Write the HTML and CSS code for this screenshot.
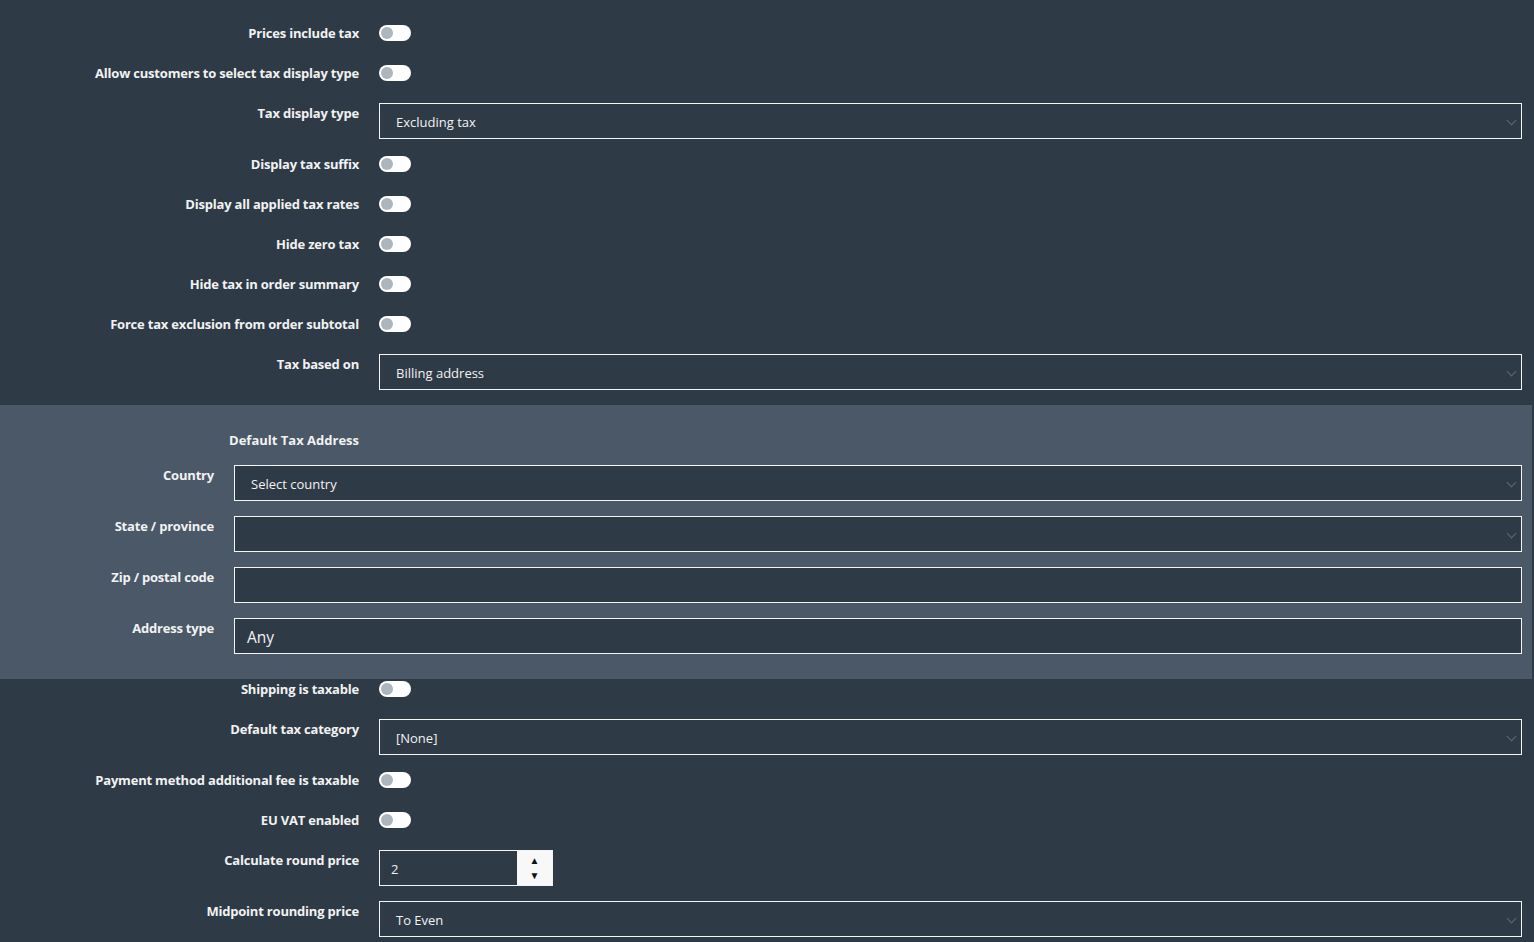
FILE: index.html
```html
<!DOCTYPE html>
<html lang="en">
<head>
    <meta charset="UTF-8">
    <title>Tax settings</title>
    <link rel="stylesheet" href="styles.css">
</head>
<body>
    <div class="settings">
        <div class="row toggle-row">
            <label class="row-label">Prices include tax</label>
            <span class="switch"></span>
        </div>
        <div class="row toggle-row">
            <label class="row-label">Allow customers to select tax display type</label>
            <span class="switch"></span>
        </div>
        <div class="row field-row">
            <label class="row-label">Tax display type</label>
            <div class="select">Excluding tax</div>
        </div>
        <div class="row toggle-row">
            <label class="row-label">Display tax suffix</label>
            <span class="switch"></span>
        </div>
        <div class="row toggle-row">
            <label class="row-label">Display all applied tax rates</label>
            <span class="switch"></span>
        </div>
        <div class="row toggle-row">
            <label class="row-label">Hide zero tax</label>
            <span class="switch"></span>
        </div>
        <div class="row toggle-row">
            <label class="row-label">Hide tax in order summary</label>
            <span class="switch"></span>
        </div>
        <div class="row toggle-row">
            <label class="row-label">Force tax exclusion from order subtotal</label>
            <span class="switch"></span>
        </div>
        <div class="row field-row">
            <label class="row-label">Tax based on</label>
            <div class="select">Billing address</div>
        </div>

        <div class="address-panel">
            <div class="panel-title">Default Tax Address</div>
            <div class="panel-row">
                <label class="panel-label">Country</label>
                <div class="select panel-select">Select country</div>
            </div>
            <div class="panel-row">
                <label class="panel-label">State / province</label>
                <div class="select panel-select"></div>
            </div>
            <div class="panel-row">
                <label class="panel-label">Zip / postal code</label>
                <div class="text-input"></div>
            </div>
            <div class="panel-row">
                <label class="panel-label">Address type</label>
                <div class="text-input large">Any</div>
            </div>
        </div>

        <div class="row toggle-row">
            <label class="row-label">Shipping is taxable</label>
            <span class="switch"></span>
        </div>
        <div class="row field-row">
            <label class="row-label">Default tax category</label>
            <div class="select">[None]</div>
        </div>
        <div class="row toggle-row">
            <label class="row-label">Payment method additional fee is taxable</label>
            <span class="switch"></span>
        </div>
        <div class="row toggle-row">
            <label class="row-label">EU VAT enabled</label>
            <span class="switch"></span>
        </div>
        <div class="row field-row">
            <label class="row-label">Calculate round price</label>
            <div class="number-input">
                <span class="number-value">2</span>
                <span class="spinner">
                    <span>&#9650;</span>
                    <span>&#9660;</span>
                </span>
            </div>
        </div>
        <div class="row field-row">
            <label class="row-label">Midpoint rounding price</label>
            <div class="select">To Even</div>
        </div>
    </div>
</body>
</html>
```

FILE: styles.css
```css
* {
    box-sizing: border-box;
}
body {
    margin: 0;
    background-color: #2f3a47;
    font-family: "Open Sans", "Noto Sans", Arial, sans-serif;
    color: #f2f2f2;
    overflow: hidden;
}
.settings {
    padding-top: 23px;
}
.row {
    display: flex;
    align-items: flex-start;
    padding-right: 12px;
}
.row-label {
    width: 359px;
    margin-right: 20px;
    flex-shrink: 0;
    text-align: right;
    font-size: 13px;
    font-weight: 700;
    line-height: 20px;
    letter-spacing: -0.2px;
    white-space: nowrap;
}
.toggle-row {
    height: 20px;
    margin-bottom: 20px;
    align-items: center;
}
.field-row {
    margin-bottom: 15px;
}
.switch {
    position: relative;
    width: 32px;
    height: 16px;
    border-radius: 8px;
    background-color: #fff;
}
.switch::after {
    content: "";
    position: absolute;
    left: 2px;
    top: 2px;
    width: 12px;
    height: 12px;
    border-radius: 50%;
    background-color: #adb5bd;
}
.select,
.text-input {
    position: relative;
    flex: 1;
    height: 36px;
    border: 1px solid #f4f4f4;
    background-color: #2f3a47;
    padding-left: 16px;
    font-size: 13px;
    line-height: 36px;
}
.select::after {
    content: "";
    position: absolute;
    right: 6px;
    top: 13px;
    width: 6px;
    height: 6px;
    border-right: 1.5px solid #666;
    border-bottom: 1.5px solid #666;
    transform: rotate(45deg);
}
.address-panel {
    background-color: #4a5868;
    margin-right: 2px;
    padding: 25px 10px 25px 0;
}
.panel-title {
    width: 359px;
    text-align: right;
    font-size: 13px;
    font-weight: 700;
    line-height: 20px;
    margin-bottom: 15px;
}
.panel-row {
    display: flex;
    margin-bottom: 15px;
}
.panel-row:last-child {
    margin-bottom: 0;
}
.panel-label {
    width: 214px;
    margin-right: 20px;
    flex-shrink: 0;
    text-align: right;
    font-size: 13px;
    font-weight: 700;
    line-height: 20px;
    letter-spacing: -0.2px;
}
.panel-select {
    background-color: #2f3a47;
}
.text-input {
    padding-left: 12px;
}
.text-input.large {
    font-size: 15.5px;
    line-height: 37px;
}
.number-input {
    display: flex;
    width: 174px;
    height: 36px;
    border: 1px solid #f4f4f4;
}
.number-value {
    flex: 1;
    padding-left: 11px;
    font-size: 13px;
    line-height: 36px;
}
.spinner {
    width: 35px;
    background-color: #f8f8f8;
    color: #111;
    display: flex;
    flex-direction: column;
    align-items: center;
    justify-content: center;
    font-size: 10px;
    line-height: 15px;
}
```
